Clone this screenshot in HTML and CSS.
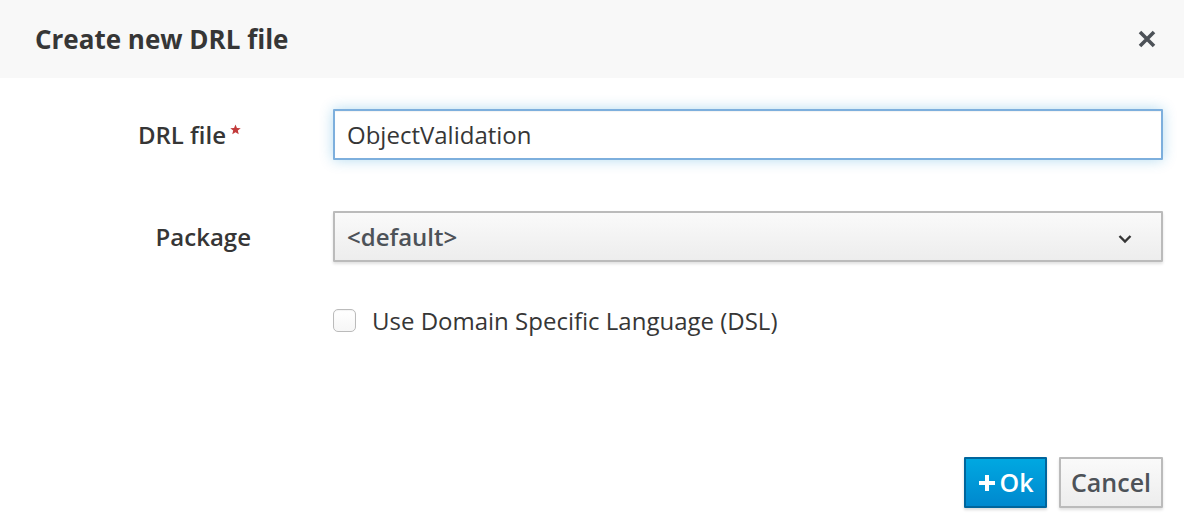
FILE: index.html
```html
<!DOCTYPE html>
<html>
<head>
<meta charset="utf-8">
<link rel="stylesheet" href="styles.css">
</head>
<body>
<div class="modal">
  <div class="modal-header">
    <h4 class="modal-title">Create new DRL file</h4>
    <button class="close" aria-label="Close">
      <svg width="18" height="18" viewBox="0 0 18 18"><path d="M2 2 L16 16 M16 2 L2 16" stroke="#4d5258" stroke-width="3.6" stroke-linecap="butt"/></svg>
    </button>
  </div>
  <div class="modal-body">
    <div class="form-row">
      <label class="form-label required"><span>DRL file</span><svg class="star" width="11" height="11" viewBox="0 0 20 20"><path d="M10 1 L12.6 7.2 L19.5 7.6 L14.2 12 L15.9 18.7 L10 15 L4.1 18.7 L5.8 12 L0.5 7.6 L7.4 7.2 Z" fill="#c23a3a"/></svg></label>
      <div class="control"><input class="text-input" type="text" value="ObjectValidation"></div>
    </div>
    <div class="form-row">
      <label class="form-label">Package</label>
      <div class="control">
        <div class="select">
          <span class="select-text">&lt;default&gt;</span>
          <svg class="caret" width="14" height="10" viewBox="0 0 14 10"><path d="M1.5 2 L7 7.5 L12.5 2" fill="none" stroke="#363636" stroke-width="2.4"/></svg>
        </div>
      </div>
    </div>
    <div class="form-row check-row">
      <div class="form-label"></div>
      <label class="checkbox"><span class="box"></span><span>Use Domain Specific Language (DSL)</span></label>
    </div>
  </div>
  <div class="modal-footer">
    <button class="btn btn-primary"><svg width="18" height="18" viewBox="0 0 18 18"><path d="M9 1 V17 M1 9 H17" stroke="#fff" stroke-width="4"/></svg><span>Ok</span></button>
    <button class="btn btn-default">Cancel</button>
  </div>
</div>
</body>
</html>
```

FILE: styles.css
```css
html, body {
  margin: 0;
  padding: 0;
  background: #fff;
}
body {
  font-family: "Open Sans", "Liberation Sans", sans-serif;
  color: #363636;
  width: 1184px;
  height: 526px;
  overflow: hidden;
}
.modal {
  display: flex;
  flex-direction: column;
  height: 526px;
}
.modal-header {
  background: #f8f8f8;
  height: 78px;
  box-sizing: border-box;
  padding: 0 27px 0 35px;
  display: flex;
  align-items: center;
  justify-content: space-between;
}
.modal-title {
  margin: 0;
  font-size: 26px;
  font-weight: 700;
  color: #363636;
}
.close {
  background: none;
  border: 0;
  padding: 0;
  display: flex;
  align-items: center;
  justify-content: center;
  width: 20px;
  height: 20px;
  cursor: pointer;
}
.modal-body {
  padding: 31px 21px 0 0;
  display: flex;
  flex-direction: column;
  gap: 52px;
}
.form-row {
  display: flex;
  align-items: center;
  height: 50px;
}
.form-label {
  width: 251px;
  flex: none;
  text-align: right;
  font-size: 24px;
  font-weight: 600;
  color: #363636;
  margin-right: 82px;
  box-sizing: border-box;
}
.form-label.required {
  padding-right: 10px;
}
.star {
  margin-left: 4px;
  vertical-align: 9px;
}
.control {
  flex: 1;
}
.text-input {
  display: block;
  width: 100%;
  height: 51px;
  box-sizing: border-box;
  border: 2px solid #7dafdd;
  border-radius: 1px;
  font-family: inherit;
  font-size: 24px;
  color: #363636;
  padding: 0 12px;
  outline: none;
  box-shadow: inset 0 1px 1px rgba(3,3,3,0.05), 0 0 14px rgba(0,136,206,0.3);
}
.select {
  height: 51px;
  box-sizing: border-box;
  border: 2px solid #bbbbbb;
  border-radius: 1px;
  background: linear-gradient(to bottom, #fafafa 0%, #ededed 100%);
  box-shadow: 0 2px 3px rgba(3,3,3,0.12);
  display: flex;
  align-items: center;
  justify-content: space-between;
  padding: 0 29px 0 12px;
}
.select-text {
  font-size: 24px;
  font-weight: 600;
  color: #4d5258;
}
.caret {
  margin-top: 6px;
}
.check-row {
  height: 24px;
  margin-top: -5px;
}
.checkbox {
  display: flex;
  align-items: center;
  gap: 16px;
  font-size: 24px;
  color: #363636;
}
.box {
  width: 21px;
  height: 21px;
  border: 1px solid #bbbbbb;
  border-radius: 5px;
  background: linear-gradient(#fff, #f6f6f6);
  box-shadow: inset 0 1px 1px rgba(0,0,0,0.05);
}
.modal-footer {
  margin-top: auto;
  padding: 0 21px 18px 0;
  display: flex;
  justify-content: flex-end;
  gap: 12px;
}
.btn {
  height: 51px;
  box-sizing: border-box;
  font-family: inherit;
  font-size: 25px;
  font-weight: 600;
  border-radius: 1px;
  display: flex;
  align-items: center;
  justify-content: center;
  cursor: pointer;
}
.btn-primary {
  width: 83px;
  background: linear-gradient(to bottom, #00a8e1 0%, #0088ce 100%);
  border: 2px solid #00659c;
  color: #fff;
  gap: 4px;
  padding: 0 0 2px 0;
  box-shadow: 0 2px 3px rgba(3,3,3,0.15);
}
.btn-primary svg {
  margin-top: 2px;
}
.btn-default {
  width: 104px;
  background: linear-gradient(to bottom, #fafafa 0%, #ededed 100%);
  border: 2px solid #bbbbbb;
  color: #4d5258;
  padding: 0 0 2px 0;
  box-shadow: 0 2px 3px rgba(3,3,3,0.12);
}
```
